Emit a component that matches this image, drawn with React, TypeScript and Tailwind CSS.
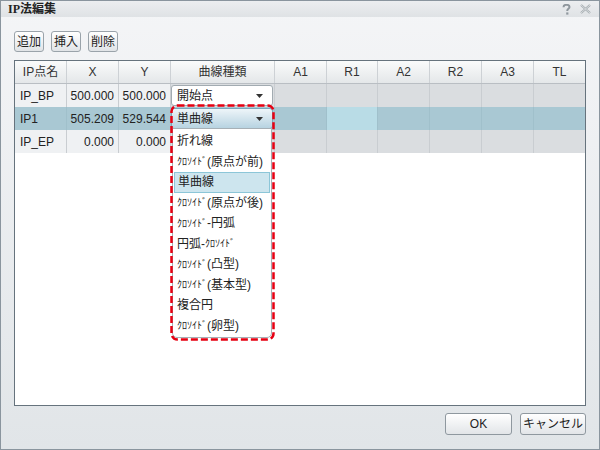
import React from "react";

const cols = ["IP点名", "X", "Y", "曲線種類", "A1", "R1", "A2", "R2", "A3", "TL"];

const rows = [
  { name: "IP_BP", x: "500.000", y: "500.000", kind: "開始点", sel: false },
  { name: "IP1", x: "505.209", y: "529.544", kind: "単曲線", sel: true },
  { name: "IP_EP", x: "0.000", y: "0.000", kind: "", sel: false },
];

// [before, halfwidth kana, after]
const options: [string, string, string][] = [
  ["折れ線", "", ""],
  ["", "ｸﾛｿｲﾄﾞ", "(原点が前)"],
  ["単曲線", "", ""],
  ["", "ｸﾛｿｲﾄﾞ", "(原点が後)"],
  ["", "ｸﾛｿｲﾄﾞ", "-円弧"],
  ["円弧-", "ｸﾛｿｲﾄﾞ", ""],
  ["", "ｸﾛｿｲﾄﾞ", "(凸型)"],
  ["", "ｸﾛｿｲﾄﾞ", "(基本型)"],
  ["複合円", "", ""],
  ["", "ｸﾛｿｲﾄﾞ", "(卵型)"],
];

const gridCols = "grid grid-cols-[52px_52px_52px_104px_52px_51px_52px_52px_52px_51px]";

const Arrow = () => (
  <svg width="7" height="4" viewBox="0 0 7 4" className="ml-auto mr-[9px]">
    <path d="M0 0H7L3.5 4Z" fill="#333" />
  </svg>
);

const ToolButton: React.FC<{ label: string; w: string }> = ({ label, w }) => (
  <button
    className={`${w} h-[21px] flex items-center justify-center rounded-[3px] border border-[#9aa3aa] bg-gradient-to-b from-white to-[#e1e4e7] text-[12px] text-[#222]`}
  >
    {label}
  </button>
);

const App: React.FC = () => {
  return (
    <div className="relative w-[600px] h-[450px] flex flex-col border border-[#8a959e] bg-gradient-to-b from-[#f4f5f7] to-[#e1e5e8] font-['Liberation_Sans','Noto_Sans_CJK_JP',sans-serif] text-[12px] text-[#222] overflow-hidden">
      {/* title bar */}
      <div className="h-[16px] flex items-center bg-gradient-to-b from-[#eceef0] to-[#dfe2e5] pl-[7px] pr-[8px]">
        <span className="font-bold text-[12px] text-[#222] font-['Liberation_Serif','Noto_Sans_CJK_JP',serif]">IP法編集</span>
        <div className="ml-auto flex items-center gap-[9px]">
          <svg width="9" height="11" viewBox="0 0 9 11">
            <path d="M1.5 3.2C1.5 1.6 2.8 0.8 4.5 0.8S7.5 1.7 7.5 3.1C7.5 4.6 5.3 5 5.3 6.6V7" stroke="#8f979d" strokeWidth="2" fill="none" />
            <rect x="4.2" y="8.4" width="2.2" height="2.2" fill="#8f979d" />
          </svg>
          <svg width="11" height="10" viewBox="0 0 11 10">
            <path d="M1 1L10 9M10 1L1 9" stroke="#a3aaaf" strokeWidth="2.2" />
            <path d="M1 1L10 9M10 1L1 9" stroke="#eef0f1" strokeWidth="0.7" />
          </svg>
        </div>
      </div>

      {/* toolbar */}
      <div className="flex gap-[7px] pl-[13px] pt-[14px]">
        <ToolButton label="追加" w="w-[30px]" />
        <ToolButton label="挿入" w="w-[30px]" />
        <ToolButton label="削除" w="w-[30px]" />
      </div>

      {/* table */}
      <div className="relative ml-[13px] mt-[8px] w-[572px] h-[346px] border border-[#66737d] bg-white">
        <div className={`${gridCols} h-[23px] border-b border-[#b9bec3] bg-gradient-to-b from-[#fafbfb] to-[#e4e7e9]`}>
          {cols.map((c, i) => (
            <div
              key={c}
              className={`flex items-center justify-center text-[#333] ${i < cols.length - 1 ? "border-r border-[#cdd1d5]" : ""}`}
            >
              {c}
            </div>
          ))}
        </div>
        {rows.map((r) => {
          const light = r.sel ? "bg-[#a9c8d3]" : "bg-[#eff1f3]";
          const gray = r.sel ? "bg-[#a9c8d3]" : "bg-[#dadde0]";
          const line = r.sel ? "border-[#a0c0cb]" : "border-[#c9cdd1]";
          return (
            <div key={r.name} className={`${gridCols} h-[23px]`}>
              <div className={`${light} border-r ${line} flex items-center pl-[5px]`}>{r.name}</div>
              <div className={`${light} border-r ${line} flex items-center justify-end pr-[4px]`}>{r.x}</div>
              <div className={`${light} border-r ${line} flex items-center justify-end pr-[4px]`}>{r.y}</div>
              <div className={`${gray} border-r ${line} flex items-center`}>
                {r.kind && (
                  <div
                    className={`w-[102px] h-[21px] flex items-center pl-[5px] rounded-[3px] border ${
                      r.sel
                        ? "border-[#7aa6bb] bg-gradient-to-b from-[#eef5f9] to-[#b7d3e1]"
                        : "border-[#a2abb1] bg-white"
                    }`}
                  >
                    <span>{r.kind}</span>
                    <Arrow />
                  </div>
                )}
              </div>
              {[0, 1, 2, 3, 4, 5].map((k) => (
                <div
                  key={k}
                  className={`${r.sel && k === 1 ? "bg-[#b9dce6]" : gray} ${k < 5 ? `border-r ${line}` : ""}`}
                />
              ))}
            </div>
          );
        })}

        {/* dropdown list */}
        <div className="absolute left-[157px] top-[67px] w-[100px] h-[210px] bg-white border border-[#a7b0b6] rounded-b-[5px] pt-[2px] px-[1px]">
          {options.map(([a, k, t]) => (
            <div
              key={a + k + t}
              className={`h-[20.5px] flex items-center pl-[3px] whitespace-nowrap ${
                a === "単曲線" ? "bg-[#cde5ee] border border-[#8cc6d8]" : ""
              }`}
            >
              {a && <span>{a}</span>}
              {k && <span className="text-[10px]">{k}</span>}
              {t && <span>{t}</span>}
            </div>
          ))}
        </div>
      </div>

      {/* footer */}
      <div className="flex justify-end gap-[8px] pr-[13px] mt-[7px]">
        <button className="w-[67px] h-[22px] rounded-[3px] border border-[#8f989f] bg-gradient-to-b from-white to-[#e2e5e8] text-[12px] text-[#222]">
          OK
        </button>
        <button className="w-[66px] h-[22px] rounded-[3px] border border-[#8f989f] bg-gradient-to-b from-white to-[#e2e5e8] text-[12px] text-[#222]">
          キャンセル
        </button>
      </div>

      {/* red dashed annotation */}
      <svg className="absolute left-[169px] top-[103px]" width="105" height="237" viewBox="0 0 105 237">
        <rect x="1.5" y="1.5" width="102" height="234" rx="6" fill="none" stroke="#e60012" strokeWidth="2.5" strokeDasharray="7 3" />
      </svg>
    </div>
  );
};

export default App;
